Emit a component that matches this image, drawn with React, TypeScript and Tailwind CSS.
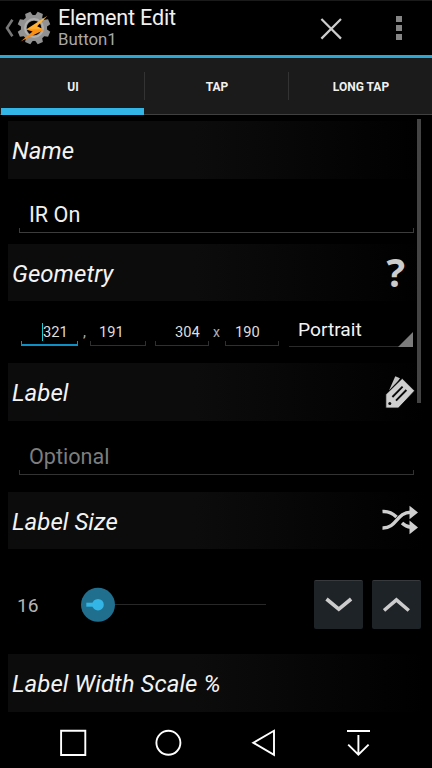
import React from "react";

const GEAR_TEETH = [0, 45, 90, 135, 180, 225, 270, 315];

function TaskerLogo() {
  return (
    <svg width="34" height="34" viewBox="0 0 34 34" className="block shrink-0">
      <defs>
        <linearGradient id="bolt" x1="0" y1="0" x2="0" y2="1">
          <stop offset="0" stopColor="#ffc24c" />
          <stop offset="0.5" stopColor="#ffab2a" />
          <stop offset="0.55" stopColor="#fb9016" />
          <stop offset="1" stopColor="#f58a14" />
        </linearGradient>
      </defs>
      <g fill="#929292">
        {GEAR_TEETH.map((a) => (
          <path key={a} d="M13 6 L14.2 0.6 H19.8 L21 6 Z" transform={`rotate(${a + 22.5} 17 17)`} />
        ))}
      </g>
      <circle cx="17" cy="17" r="10.2" fill="none" stroke="#929292" strokeWidth="5.8" />
      <circle cx="17" cy="17" r="9" fill="none" stroke="#b0b0b0" strokeWidth="2" />
      <path d="M30.4 4.8 L9 18.4 L15.6 20.4 L3.6 30.4 L27.2 18.8 L20.2 15.2 Z" fill="url(#bolt)" />
    </svg>
  );
}

function Tab({ label, active, divider }: { label: string; active?: boolean; divider?: boolean }) {
  return (
    <div className="relative flex flex-1 items-center justify-center pl-[2px] text-xs font-bold text-[#f0f0f0]">
      {label}
      {divider && <span className="absolute right-[-1px] top-[14px] h-7 w-px bg-[#333333]" />}
      {active && <span className="absolute bottom-0 left-px right-0 h-[7px] bg-[#33b5e5]" />}
    </div>
  );
}

function Section({ title, className, children }: { title: string; className: string; children?: React.ReactNode }) {
  return (
    <div
      className={`ml-2 mr-2 flex shrink-0 items-center justify-between bg-linear-to-r/srgb from-[#0c0c0c] from-45% to-black pl-1 ${className}`}
    >
      <span className="pt-[2px] text-[24px] italic leading-7 tracking-[0.05px] text-[#f3f3f3]">{title}</span>
      {children}
    </div>
  );
}

function Brackets({ className }: { className: string }) {
  return <div className={`h-[5px] border-x border-b ${className}`} />;
}

function NumberField({ value, className, pad, line }: { value: string; className: string; pad: string; line: string }) {
  return (
    <div className={`flex flex-col ${className}`}>
      <span className={`text-[14.7px] leading-[18px] text-[#dedede] ${pad}`}>{value}</span>
      <Brackets className={line} />
    </div>
  );
}

function TagsIcon() {
  return (
    <svg width="30" height="34" viewBox="0 0 30 34" className="mr-[9px] block">
      <path d="M4 15.4 L10.3 1.2 L15 3.2 L13 6 Z" fill="#c4c4c4" />
      <path d="M0.8 33 V19.4 L17.2 3.4 L29.6 15.8 L13.4 33 Z" fill="#cfcfcf" stroke="#080808" strokeWidth="0.8" />
      <circle cx="4.8" cy="28.6" r="1.5" fill="#090909" />
      <path d="M7.4 22 L17.6 11.6 M11 25.6 L21.4 15" stroke="#090909" strokeWidth="1.9" />
    </svg>
  );
}

function ShuffleIcon() {
  return (
    <svg width="36" height="30" viewBox="0 0 36 30" className="-mt-px mr-[6px] block" fill="none">
      <path d="M0.5 6.5 C7 6 10.5 8 14.5 12 M20 18 C22.5 20.5 24.5 21.8 29 22.3" stroke="#cfcfcf" strokeWidth="3.4" />
      <path d="M0.5 23 C15 23.5 14.5 7 29 7.3" stroke="#cfcfcf" strokeWidth="3.4" />
      <path d="M27.5 0.7 L36 7.4 L27.5 14.2 Z M27.5 15.6 L36 22.4 L27.5 29.2 Z" fill="#cfcfcf" />
    </svg>
  );
}

function StepButton({ d }: { d: string }) {
  return (
    <div className="flex h-[49px] w-[49px] items-center justify-center rounded-[2px] border-t border-[#363a3d] bg-[#1e2327]">
      <svg width="28" height="16" viewBox="0 0 28 16" fill="none">
        <path d={d} stroke="#cccccc" strokeWidth="3.6" />
      </svg>
    </div>
  );
}

export default function App() {
  return (
    <div className="flex h-[768px] w-[432px] flex-col overflow-hidden bg-black font-['Roboto',sans-serif]">
      <header className="flex h-[58px] shrink-0 border-b-[3px] border-t border-b-[#2da6d3] border-t-[#1a1a1a]">
        <svg width="9" height="18" viewBox="0 0 9 18" className="ml-[5px] mt-[18px] block shrink-0" fill="none">
          <path d="M7.4 0.8 L2 9 L7.4 17.2" stroke="#777777" strokeWidth="2.6" />
        </svg>
        <div className="ml-[3px] mt-[10px]">
          <TaskerLogo />
        </div>
        <div className="ml-[7px] flex w-[240px] flex-col">
          <span className="mt-[4px] text-[21.6px] leading-[26px] tracking-[-0.2px] text-[#f0f0f0]">Element Edit</span>
          <span className="-mt-[2px] text-[16.8px] leading-5 text-[#a8a8a8]">Button1</span>
        </div>
        <svg width="24" height="24" viewBox="0 0 24 24" className="ml-[21px] mt-[16px] block shrink-0" fill="none">
          <path d="M2.4 2 L22 21.6 M22 2 L2.4 21.6" stroke="#cccccc" strokeWidth="2.2" />
        </svg>
        <div className="ml-[53px] mt-[15px] flex flex-col gap-[3px]">
          <i className="h-[6px] w-[6px] bg-[#858585]" />
          <i className="h-[6px] w-[6px] bg-[#858585]" />
          <i className="h-[6px] w-[6px] bg-[#858585]" />
        </div>
      </header>

      <nav className="flex h-[57px] shrink-0 border-b border-[#404040] bg-[#1b1b1b]">
        <div className="-mb-px flex flex-1">
          <Tab label="UI" active divider />
          <Tab label="TAP" divider />
          <Tab label="LONG TAP" />
        </div>
      </nav>

      <main className="relative flex h-[597px] shrink-0 flex-col pt-[6px]">
        <span className="absolute right-[11px] top-[4px] h-[284px] w-1 bg-[#444444]" />

        <Section title="Name" className="h-[58px]" />
        <div className="flex h-[65px] shrink-0 flex-col pl-[19px] pr-[18px] pt-[23px]">
          <span className="pl-[10px] text-[21.6px] leading-[26px] text-[#f0f0f0]">IR On</span>
          <Brackets className="border-[#3c3c3c]" />
        </div>

        <Section title="Geometry" className="h-[57px]">
          <span className="-mt-[2px] mr-[19px] font-['Open_Sans',sans-serif] text-[39px] font-bold leading-10 text-[#cccccc]">?</span>
        </Section>
        <div className="flex h-[62px] shrink-0 pl-[21px] pt-[22px]">
          <NumberField value="321" className="w-[57px]" pad="ml-[21px] border-l border-[#20c8d0]" line="border-[#0f8fc4] border-b-2" />
          <span className="w-[12px] pl-[5px] text-[15px] leading-[18px] text-[#b0b0b0]">,</span>
          <NumberField value="191" className="w-14" pad="pl-[9px]" line="border-[#303030]" />
          <NumberField value="304" className="ml-[9px] w-[54px]" pad="pl-5" line="border-[#303030]" />
          <span className="w-[16px] pl-1 text-[14px] leading-[18px] text-[#b0b0b0]">x</span>
          <NumberField value="190" className="w-[54px]" pad="pl-[10px]" line="border-[#303030]" />
          <div className="relative -mt-[6px] ml-[10px] h-[30px] w-[124px] border-b border-[#2a2a2a] pl-[9px] text-[19.2px] leading-[26px] text-[#f3f3f3]">
            Portrait
            <svg width="15" height="15" viewBox="0 0 15 15" className="absolute -bottom-px right-0">
              <path d="M15 0 V15 H0 Z" fill="#7c7c7c" />
            </svg>
          </div>
        </div>

        <Section title="Label" className="h-[58px]">
          <TagsIcon />
        </Section>
        <div className="flex h-[71px] shrink-0 flex-col pl-[19px] pr-[18px] pt-[23px]">
          <span className="pl-[10px] text-[21.6px] leading-[26px] text-[#7d7d7d]">Optional</span>
          <Brackets className="border-[#333333]" />
        </div>

        <Section title="Label Size" className="h-[57px]">
          <ShuffleIcon />
        </Section>
        <div className="flex h-[105px] shrink-0 items-center pl-[17px] pt-[6px]">
          <span className="w-[64px] pt-[2px] text-[19.2px] leading-6 text-[#b5b5b5]">16</span>
          <svg width="190" height="36" viewBox="0 0 190 36" className="block">
            <path d="M17 17.5 H185" stroke="#282828" />
            <circle cx="17" cy="17.7" r="17" fill="#206f8e" />
            <path d="M5.3 17.7 H17" stroke="#33b5e5" strokeWidth="4" />
            <circle cx="17" cy="17.7" r="5.8" fill="#33b5e5" />
          </svg>
          <div className="ml-[43px] flex gap-[9px]">
            <StepButton d="M1.5 2 L13.8 12.2 L26.1 2" />
            <StepButton d="M1 13.5 L13.4 2.9 L25.8 13.5" />
          </div>
        </div>

        <Section title="Label Width Scale %" className="h-[58px]" />
      </main>

      <footer className="flex flex-1 pt-[17px]">
        <svg width="432" height="30" viewBox="0 0 432 30" fill="none" stroke="#ffffff" strokeWidth="1.9">
          <path d="M61.1 1.7 H85.3 V26 H61.1 Z" />
          <circle cx="168.4" cy="13.8" r="12" />
          <path d="M274 1.8 L253.3 13.8 L274 25.8 Z" />
          <path d="M347 2 H370 M358.4 6 V25.5 M348.2 15.6 L358.4 25.6 L368.6 15.6" />
        </svg>
      </footer>
    </div>
  );
}
